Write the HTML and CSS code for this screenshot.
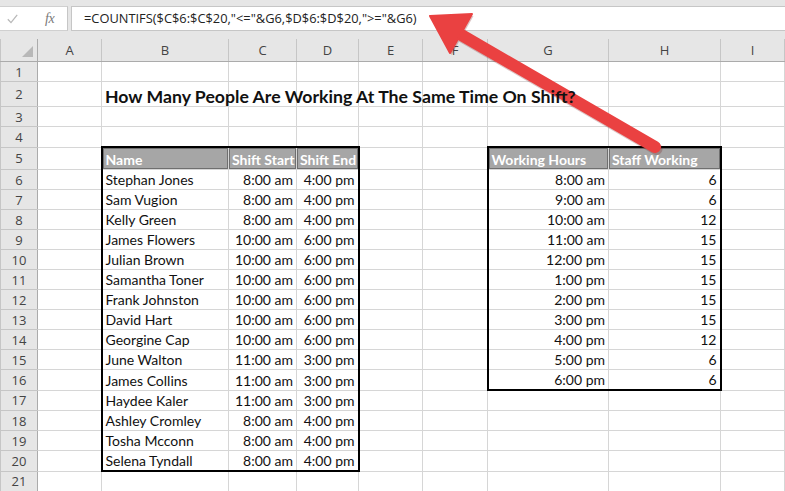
FILE: index.html
```html
<!DOCTYPE html>
<html>
<head>
<meta charset="utf-8">
<link rel="stylesheet" href="styles.css">
</head>
<body>
<div class="app">
  <div class="fbar">
    <div class="fbtns">
      <span class="chk"><svg width="11" height="10" viewBox="0 0 11 10"><path d="M0.8 5.2 L4 8.6 L10.2 0.8" fill="none" stroke="#b9b9b9" stroke-width="1.3"/></svg></span>
      <span class="fx">fx</span>
    </div>
    <div class="finput">=COUNTIFS($C$6:$C$20,"&lt;="&amp;G6,$D$6:$D$20,"&gt;="&amp;G6)</div>
  </div>
  <table class="sheet">
    <colgroup>
      <col class="c-rh"><col class="c-a"><col class="c-b"><col class="c-c"><col class="c-d"><col class="c-e"><col class="c-f"><col class="c-g"><col class="c-h"><col class="c-i"><col class="c-j">
    </colgroup>
    <tr class="hrow">
      <th class="corner"><span class="tri"></span></th><th>A</th><th>B</th><th>C</th><th>D</th><th>E</th><th>F</th><th>G</th><th>H</th><th>I</th><th></th>
    </tr>
    <tr class="r20"><th>1</th><td></td><td></td><td></td><td></td><td></td><td></td><td></td><td></td><td></td><td></td></tr>
    <tr class="r25"><th>2</th><td></td><td class="title">How Many People Are Working At The Same Time On Shift?</td><td></td><td></td><td></td><td></td><td></td><td></td><td></td><td></td></tr>
    <tr class="r20"><th>3</th><td></td><td></td><td></td><td></td><td></td><td></td><td></td><td></td><td></td><td></td></tr>
    <tr class="r20"><th>4</th><td></td><td></td><td></td><td></td><td></td><td></td><td></td><td></td><td></td><td></td></tr>
    <tr class="r22"><th>5</th><td></td><td class="hd t l">Name</td><td class="hd t">Shift Start</td><td class="hd t r">Shift End</td><td></td><td></td><td class="hd t l">Working Hours</td><td class="hd t r">Staff Working</td><td></td><td></td></tr>
    <tr class="r20"><th>6</th><td></td><td class="l">Stephan Jones</td><td class="n">8:00 am</td><td class="n r">4:00 pm</td><td></td><td></td><td class="n l">8:00 am</td><td class="n r">6</td><td></td><td></td></tr>
    <tr class="r20"><th>7</th><td></td><td class="l">Sam Vugion</td><td class="n">8:00 am</td><td class="n r">4:00 pm</td><td></td><td></td><td class="n l">9:00 am</td><td class="n r">6</td><td></td><td></td></tr>
    <tr class="r20"><th>8</th><td></td><td class="l">Kelly Green</td><td class="n">8:00 am</td><td class="n r">4:00 pm</td><td></td><td></td><td class="n l">10:00 am</td><td class="n r">12</td><td></td><td></td></tr>
    <tr class="r20"><th>9</th><td></td><td class="l">James Flowers</td><td class="n">10:00 am</td><td class="n r">6:00 pm</td><td></td><td></td><td class="n l">11:00 am</td><td class="n r">15</td><td></td><td></td></tr>
    <tr class="r20"><th>10</th><td></td><td class="l">Julian Brown</td><td class="n">10:00 am</td><td class="n r">6:00 pm</td><td></td><td></td><td class="n l">12:00 pm</td><td class="n r">15</td><td></td><td></td></tr>
    <tr class="r20"><th>11</th><td></td><td class="l">Samantha Toner</td><td class="n">10:00 am</td><td class="n r">6:00 pm</td><td></td><td></td><td class="n l">1:00 pm</td><td class="n r">15</td><td></td><td></td></tr>
    <tr class="r20"><th>12</th><td></td><td class="l">Frank Johnston</td><td class="n">10:00 am</td><td class="n r">6:00 pm</td><td></td><td></td><td class="n l">2:00 pm</td><td class="n r">15</td><td></td><td></td></tr>
    <tr class="r20"><th>13</th><td></td><td class="l">David Hart</td><td class="n">10:00 am</td><td class="n r">6:00 pm</td><td></td><td></td><td class="n l">3:00 pm</td><td class="n r">15</td><td></td><td></td></tr>
    <tr class="r20"><th>14</th><td></td><td class="l">Georgine Cap</td><td class="n">10:00 am</td><td class="n r">6:00 pm</td><td></td><td></td><td class="n l">4:00 pm</td><td class="n r">12</td><td></td><td></td></tr>
    <tr class="r20"><th>15</th><td></td><td class="l">June Walton</td><td class="n">11:00 am</td><td class="n r">3:00 pm</td><td></td><td></td><td class="n l">5:00 pm</td><td class="n r">6</td><td></td><td></td></tr>
    <tr class="r20"><th>16</th><td></td><td class="l">James Collins</td><td class="n">11:00 am</td><td class="n r">3:00 pm</td><td></td><td></td><td class="n l b">6:00 pm</td><td class="n r b">6</td><td></td><td></td></tr>
    <tr class="r20"><th>17</th><td></td><td class="l">Haydee Kaler</td><td class="n">11:00 am</td><td class="n r">3:00 pm</td><td></td><td></td><td></td><td></td><td></td><td></td></tr>
    <tr class="r20"><th>18</th><td></td><td class="l">Ashley Cromley</td><td class="n">8:00 am</td><td class="n r">4:00 pm</td><td></td><td></td><td></td><td></td><td></td><td></td></tr>
    <tr class="r20"><th>19</th><td></td><td class="l">Tosha Mcconn</td><td class="n">8:00 am</td><td class="n r">4:00 pm</td><td></td><td></td><td></td><td></td><td></td><td></td></tr>
    <tr class="r20"><th>20</th><td></td><td class="l b">Selena Tyndall</td><td class="n b">8:00 am</td><td class="n r b">4:00 pm</td><td></td><td></td><td></td><td></td><td></td><td></td></tr>
    <tr class="r21"><th>21</th><td></td><td></td><td></td><td></td><td></td><td></td><td></td><td></td><td></td><td></td></tr>
  </table>
  <svg class="arrow" width="785" height="491" viewBox="0 0 785 491">
    <g transform="translate(1.5,2)" opacity="0.25">
      <line x1="458" y1="33" x2="655" y2="147" stroke="#7a1a1a" stroke-width="12" stroke-linecap="round"/>
      <polygon points="430,16 472,14 450,53" fill="#7a1a1a"/>
    </g>
    <line x1="458" y1="33" x2="655" y2="147" stroke="#ea4141" stroke-width="12" stroke-linecap="round"/>
    <polygon points="430,16 472,14 450,53" fill="#ea4141" stroke="#ea4141" stroke-width="2" stroke-linejoin="round"/>
  </svg>
</div>
</body>
</html>
```

FILE: styles.css
```css
html, body {
  margin: 0;
  padding: 0;
  background: #ffffff;
}
.app {
  position: relative;
  width: 785px;
  height: 491px;
  overflow: hidden;
  background: #e6e6e6;
}
.fbar {
  display: flex;
  height: 39px;
  padding-top: 6px;
  box-sizing: border-box;
  gap: 3px;
}
.fbtns {
  width: 68px;
  height: 25px;
  background: #ffffff;
  border-right: 1px solid #c6c6c6;
  border-top: 1px solid #d0d0d0;
  border-bottom: 1px solid #d0d0d0;
  box-sizing: border-box;
  display: flex;
  align-items: center;
}
.chk {
  display: flex;
  margin-left: 7px;
  width: 11px;
  height: 10px;
}
.fx {
  margin-left: 27px;
  font-family: "Liberation Serif", "DejaVu Serif", serif;
  font-style: italic;
  font-size: 14px;
  color: #7a7a7a;
  letter-spacing: -0.5px;
}
.finput {
  flex: 1;
  height: 25px;
  background: #ffffff;
  border: 1px solid #c6c6c6;
  border-right: none;
  box-sizing: border-box;
  padding-left: 12px;
  font-family: "Open Sans", "Noto Sans", sans-serif;
  font-size: 12.85px;
  line-height: 23px;
  color: #222222;
  white-space: nowrap;
}
.sheet {
  border-collapse: collapse;
  table-layout: fixed;
  width: 804px;
  background: #ffffff;
  font-family: "Lato", "Liberation Sans", sans-serif;
  font-size: 14px;
  color: #111111;
}
.c-rh { width: 37px; }
.c-a { width: 64px; }
.c-b { width: 127px; }
.c-c { width: 68px; }
.c-d { width: 62px; }
.c-e { width: 64px; }
.c-f { width: 65px; }
.c-g { width: 121px; }
.c-h { width: 112px; }
.c-i { width: 64px; }
.c-j { width: 20px; }
.sheet td {
  border: 1px solid #d6d6d6;
  padding: 0 3px;
  white-space: nowrap;
  overflow: visible;
  vertical-align: bottom;
  line-height: 18px;
}
.sheet th {
  background: #e6e6e6;
  border: 1px solid #c6c6c6;
  font-family: "Open Sans", "Noto Sans", sans-serif;
  font-weight: normal;
  font-size: 13px;
  color: #444444;
  padding: 0;
  text-align: center;
  line-height: 18px;
}
.hrow th {
  height: 22px;
  border-bottom: 1px solid #ababab;
  border-top: none;
  vertical-align: middle;
}
.sheet tr th:first-child {
  border-right: 1px solid #ababab;
}
.corner {
  position: relative;
}
.tri {
  position: absolute;
  right: 4px;
  bottom: 4px;
  width: 0;
  height: 0;
  border-left: 11px solid transparent;
  border-bottom: 11px solid #b8b8b8;
}
.r20 td, .r20 th { height: 19px; }
.r21 td, .r21 th { height: 20px; vertical-align: top; }
.r22 td, .r22 th { height: 21px; }
.r25 td, .r25 th { height: 24px; }
.title {
  font-weight: bold;
  font-size: 17.7px;
  overflow: visible;
  position: relative;
  z-index: 1;
  vertical-align: middle;
}
.n { text-align: right; }
.hd {
  background: #a6a6a6;
  color: #ffffff;
  font-weight: bold;
  box-shadow: inset 0 0 0 1px #6f6f6f;
  border-color: #dcdcdc;
}
.sheet td.t { border-top: 2px solid #000000; }
.sheet td.b { border-bottom: 2px solid #000000; }
.sheet td.l { border-left: 2px solid #000000; }
.sheet td.r { border-right: 2px solid #000000; }
.arrow {
  position: absolute;
  left: 0;
  top: 0;
  pointer-events: none;
}
```
